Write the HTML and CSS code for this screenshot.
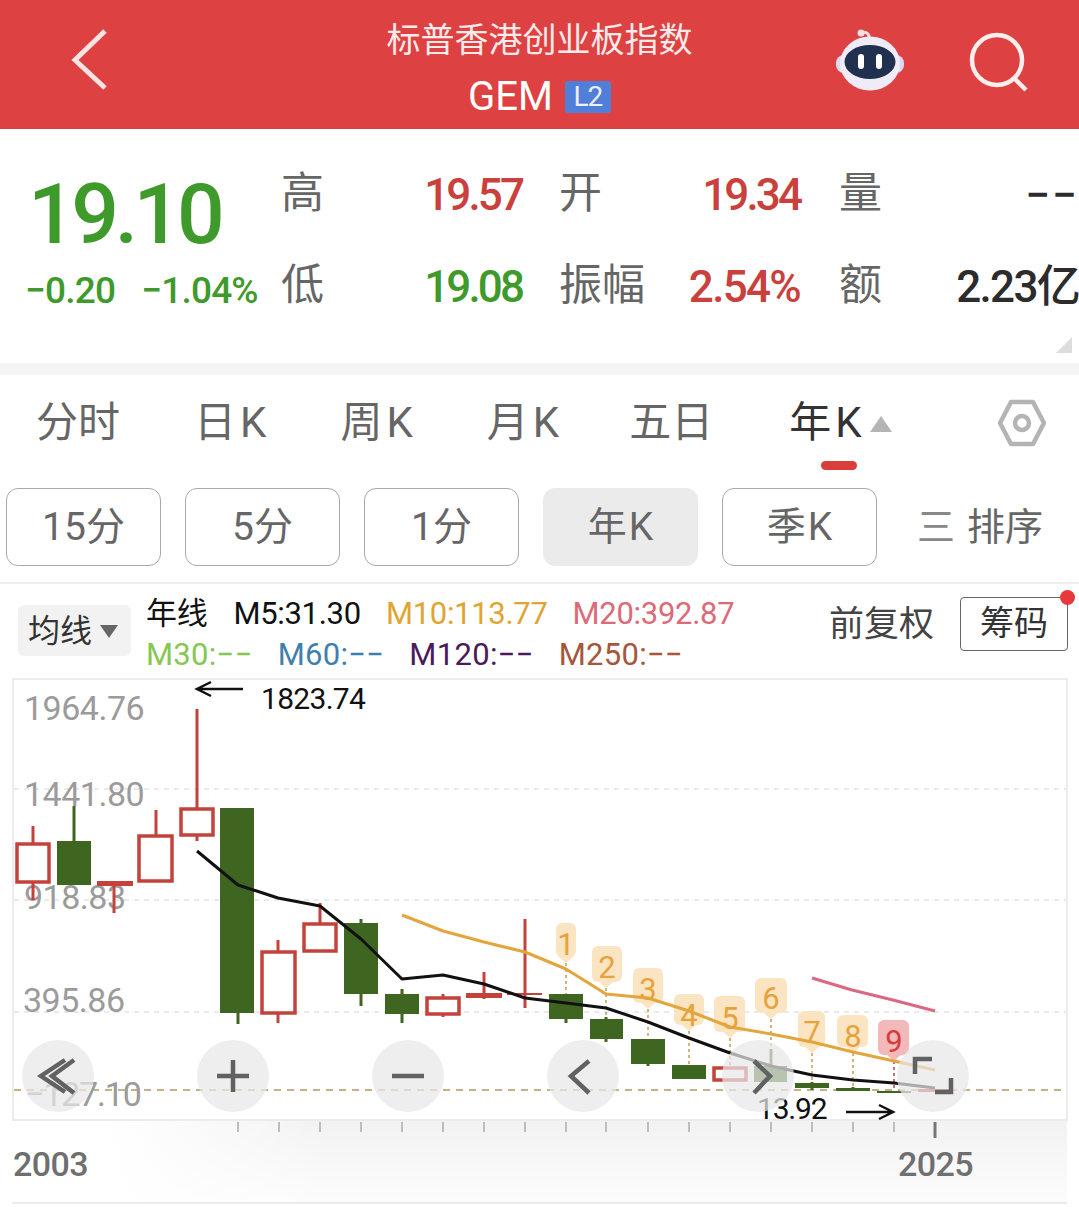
FILE: index.html
```html
<!DOCTYPE html>
<html lang="zh-CN">
<head>
<meta charset="utf-8">
<title>GEM</title>
<link rel="stylesheet" href="styles.css">
</head>
<body>
<header class="topbar">
  <svg class="back" width="40" height="64" viewBox="0 0 40 64"><path d="M35 3 L5 32 L35 60"/></svg>
  <div class="title">
    <div class="title-main">标普香港创业板指数</div>
    <div class="title-sub"><span>GEM</span><span class="badge">L2</span></div>
  </div>
  <svg class="robot" width="70" height="62" viewBox="0 0 70 62">
    <path class="ant" d="M26 4 C31 2 35 5 34 10"/>
    <circle class="ant-dot" cx="26" cy="4" r="3.5"/>
    <rect class="ear" x="1" y="26" width="68" height="18" rx="8"/>
    <ellipse class="head" cx="35" cy="34.500" rx="30" ry="27"/>
    <ellipse class="face" cx="35" cy="33" rx="25.500" ry="17"/>
    <rect class="eye" x="23" y="25" width="6" height="15" rx="3"/>
    <rect class="eye" x="41" y="25" width="6" height="15" rx="3"/>
  </svg>
  <svg class="search" width="62" height="62" viewBox="0 0 62 62"><circle cx="28" cy="28" r="25"/><path d="M46 47 L57 58"/></svg>
</header>

<section class="quote">
  <div class="price-col">
    <div class="price">19.10</div>
    <div class="change"><span>−0.20</span><span>−1.04%</span></div>
  </div>
  <div class="stats">
    <div class="stat"><span class="lab">高</span><span class="val red">19.57</span></div>
    <div class="stat"><span class="lab">开</span><span class="val red">19.34</span></div>
    <div class="stat"><span class="lab">量</span><span class="val dark dash">−−</span></div>
    <div class="stat"><span class="lab">低</span><span class="val green">19.08</span></div>
    <div class="stat"><span class="lab">振幅</span><span class="val red loose">2.54%</span></div>
    <div class="stat"><span class="lab">额</span><span class="val dark loose">2.23亿</span></div>
  </div>
  <span class="corner"></span>
</section>

<nav class="tabs">
  <span class="tab">分时</span>
  <span class="tab">日<i>K</i></span>
  <span class="tab">周<i>K</i></span>
  <span class="tab">月<i>K</i></span>
  <span class="tab tab-five">五日</span>
  <span class="tab tab-active">年<i>K</i><b class="tri"></b></span>
  <svg class="gear" width="48" height="50" viewBox="0 0 48 50"><path d="M13 4 H35 L46 25 L35 46 H13 L2 25 Z"/><circle cx="24" cy="25" r="7"/></svg>
</nav>

<div class="chips">
  <span class="chip">15分</span>
  <span class="chip">5分</span>
  <span class="chip">1分</span>
  <span class="chip chip-on">年<i>K</i></span>
  <span class="chip">季<i>K</i></span>
  <span class="sort"><span class="bars">三</span>排序</span>
</div>

<div class="legend">
  <span class="ma-select">均线<b class="tri-down"></b></span>
  <div class="ma-rows">
    <div class="ma-row"><span class="ma-name">年线</span><span>M5:31.30</span><span class="c10">M10:113.77</span><span class="c20">M20:392.87</span></div>
    <div class="ma-row ma-row-b"><span class="c30">M30:−−</span><span class="c60">M60:−−</span><span class="c120">M120:−−</span><span class="c250">M250:−−</span></div>
  </div>
  <span class="adjust">前复权</span>
  <span class="chips-btn">筹码<b class="dot"></b></span>
</div>

<svg class="chart" width="1079" height="529" viewBox="0 678 1079 529">
  <defs>
    <linearGradient id="fade" x1="0" y1="0" x2="0" y2="1"><stop offset="0" stop-color="#f2f2f2"/><stop offset="1" stop-color="#fcfcfc"/></linearGradient>
    <linearGradient id="fade-left" x1="0" y1="0" x2="1" y2="0"><stop offset="0" stop-color="#fff"/><stop offset=".3" stop-color="#fff"/><stop offset="1" stop-color="#fff" stop-opacity="0"/></linearGradient>
    <clipPath id="plot"><rect x="12" y="678" width="1055" height="442"/></clipPath>
  </defs>
  <rect class="under" x="12" y="1120" width="1055" height="82"/>
  <rect class="under-left" x="12" y="1120" width="320" height="82"/>
  <rect class="frame" x="13" y="679" width="1054" height="441"/>
  <path class="grid" d="M14 789 H1066 M14 900 H1066 M14 1012 H1066"/>
  <path class="zero" d="M14 1090 H1066"/>

  <text class="axis" x="24" y="720">1964.76</text>
  <text class="axis" x="24" y="806">1441.80</text>
  <text class="axis" x="24" y="909">918.83</text>
  <text class="axis" x="23" y="1012">395.86</text>
  <text class="axis axis-neg" x="25" y="1106">−127.10</text>

  <g class="flags">
    <rect x="556" y="923" width="20" height="34" rx="6"/><polygon points="558,956 574,956 566,963"/>
    <rect x="592" y="946" width="30" height="36" rx="6"/><polygon points="598,981 614,981 606,988"/>
    <rect x="633" y="968" width="30" height="35" rx="6"/><polygon points="640,1002 656,1002 648,1009"/>
    <rect x="674" y="994" width="30" height="31" rx="6"/><polygon points="681,1024 697,1024 689,1031"/>
    <rect x="714" y="996" width="31" height="36" rx="6"/><polygon points="722,1031 738,1031 730,1038"/>
    <rect x="755" y="978" width="32" height="35" rx="6"/><polygon points="763,1012 779,1012 771,1019"/>
    <rect x="798" y="1011" width="27" height="36" rx="6"/><polygon points="804,1046 820,1046 812,1053"/>
    <rect x="837" y="1015" width="31" height="32" rx="6"/><polygon points="845,1046 861,1046 853,1053"/>
    <rect class="flag-red" x="878" y="1020" width="31" height="35" rx="6"/><polygon class="flag-red" points="886,1054 902,1054 894,1061"/>
  </g>
  <path class="stem" d="M566 963 V994 M606 988 V1018 M648 1009 V1039 M689 1031 V1065 M730 1038 V1067 M771 1019 V1050 M812 1053 V1083 M853 1053 V1088 "/>
  <path class="stem stem-red" d="M894 1061 V1090"/>

  <g class="wick-up">
    <path d="M33 826 V843 M33 882 V900 M114 886 V913 M156 810 V835 M197 709 V808 M197 835 V841 M278 940 V951 M278 1013 V1023 M320 903 V923 M443 994 V997 M443 1014 V1017 M484 972 V999 M525 919 V1008"/>
  </g>
  <g class="wick-down">
    <path d="M74 806 V841 M238 1012 V1024 M361 919 V924 M361 993 V1006 M402 989 V995 M402 1013 V1023 M566 1018 V1023 M606 1017 V1042 M648 1063 V1066 M771 1049 V1066 M812 1082 V1090 M853 1087 V1090"/>
  </g>
  <g class="body-up">
    <rect x="17" y="844" width="32" height="38"/>
    <rect x="139" y="836" width="33" height="45"/>
    <rect x="181" y="809" width="32" height="26"/>
    <rect x="262" y="952" width="33" height="61"/>
    <rect x="304" y="924" width="32" height="27"/>
    <rect x="427" y="998" width="32" height="16"/>
    <rect x="714" y="1068" width="32" height="12"/>
  </g>
  <g class="body-flat">
    <rect x="97" y="881" width="36" height="5"/>
    <rect x="466" y="993" width="36" height="5"/>
    <rect x="507" y="993" width="35" height="2"/>
    <rect x="918" y="1089" width="34" height="3"/>
  </g>
  <g class="body-down">
    <rect x="57" y="841" width="34" height="44"/>
    <rect x="220" y="808" width="34" height="205"/>
    <rect x="344" y="923" width="34" height="71"/>
    <rect x="385" y="994" width="34" height="20"/>
    <rect x="549" y="994" width="34" height="25"/>
    <rect x="590" y="1019" width="33" height="20"/>
    <rect x="631" y="1039" width="34" height="25"/>
    <rect x="672" y="1065" width="34" height="14"/>
    <rect x="754" y="1066" width="33" height="16"/>
    <rect x="795" y="1083" width="34" height="5"/>
    <rect x="836" y="1088" width="34" height="3"/>
    <rect x="877" y="1091" width="34" height="2"/>
  </g>

  <polyline class="m20" points="812,978 852,990 893,1000 935,1011"/>
  <polyline class="m10" points="402,915 443,931 484,942 525,952 566,969 606,994 648,998 689,1011 730,1027 771,1034 812,1042 853,1052 894,1061 935,1070"/>
  <polyline class="m5" points="197,851 238,885 278,898 320,906 361,939 402,979 443,975 484,984 525,998 566,1003 606,1008 648,1022 689,1038 730,1053 771,1066 812,1075 853,1080 894,1083 935,1088"/>

  <g class="flag-num">
    <text x="566" y="955">1</text><text x="607" y="978">2</text><text x="648" y="1000">3</text>
    <text x="689" y="1026">4</text><text x="730" y="1029">5</text><text x="771" y="1009">6</text>
    <text x="812" y="1043">7</text><text x="853" y="1047">8</text><text class="flag-num-red" x="894" y="1052">9</text>
  </g>

  <text class="note" x="261" y="709">1823.74</text>
  <path class="arrow" d="M243 689 H198 M211 682 L197 689 L211 696"/>
  <g clip-path="url(#plot)"><text class="note note-low" x="757" y="1119">13.92</text></g>
  <path class="arrow" d="M846 1112 H893 M879 1105 L893 1112 L879 1119"/>

  <g class="ctrl">
    <circle cx="58" cy="1076" r="36"/><circle cx="233" cy="1076" r="36"/><circle cx="408" cy="1076" r="36"/>
    <circle cx="583" cy="1076" r="36"/><circle cx="758" cy="1076" r="36"/><circle cx="933" cy="1076" r="36"/>
  </g>
  <g class="ctrl-ico">
    <path d="M65 1060 L41 1076 L65 1092 M74 1060 L52 1076 L74 1093"/>
    <path d="M233 1060 V1092 M217 1076 H249"/>
    <path d="M392 1076 H424"/>
    <path d="M589 1061 L571 1076 L589 1093"/>
    <path d="M754 1061 L770 1076 L754 1093"/>
    <path d="M915 1074 V1059 H932 M951 1078 V1092 H935"/>
  </g>

  <path class="tick" d="M238 1122 V1132 M279 1122 V1132 M320 1122 V1132 M361 1122 V1132 M402 1122 V1132 M443 1122 V1132 M484 1122 V1132 M525 1122 V1132 M566 1122 V1132 M606 1122 V1132 M648 1122 V1132 M689 1122 V1132 M730 1122 V1132 M771 1122 V1132 M812 1122 V1132 M853 1122 V1132 M894 1122 V1132"/>
  <path class="tick-end" d="M935 1122 V1138"/>
  <text class="year" x="13" y="1176">2003</text>
  <text class="year" x="898" y="1176">2025</text>
  <path class="foot" d="M12 1203 H1067"/>
</svg>
</body>
</html>
```
FILE: styles.css
```css
* { box-sizing: border-box; }
html, body { margin: 0; padding: 0; background: #fff; }
body {
  width: 1079px;
  height: 1207px;
  overflow: hidden;
  font-family: Roboto, "Noto Sans CJK SC", sans-serif;
  color: #333;
}
i { font-style: normal; }

/* top bar */
.topbar {
  position: relative;
  height: 129px;
  background: #de4141;
  display: flex;
  align-items: center;
  justify-content: center;
}
.back { position: absolute; left: 70px; top: 28px; }
.back path { fill: none; stroke: #fbe3e3; stroke-width: 5; }
.title { color: #fff; text-align: center; display: flex; flex-direction: column; align-items: center; padding-top: 9px; }
.title-main { font-size: 34px; line-height: 46px; color: #fbeaea; }
.title-sub { display: flex; align-items: center; gap: 12px; font-size: 40px; line-height: 50px; margin-top: 9px; }
.badge {
  width: 46px; height: 32px; background: #4f7fd8; border-radius: 3px;
  font-size: 28px; line-height: 32px; text-align: center; letter-spacing: -1px; color: #eef;
}
.robot { position: absolute; left: 835px; top: 29px; }
.robot .ant { fill: none; stroke: #f3dfe4; stroke-width: 3; }
.robot .ant-dot { fill: #f3dfe4; }
.robot .ear { fill: #ded9f3; }
.robot .head { fill: #efecf8; }
.robot .face { fill: #22304f; }
.robot .eye { fill: #fff; }
.search { position: absolute; left: 969px; top: 32px; }
.search circle, .search path { fill: none; stroke: #fdeeee; stroke-width: 4.5; }

/* quote */
.quote {
  position: relative;
  height: 246px;
  display: flex;
  padding-top: 41px;
  border-bottom: 12px solid #f4f4f4;
}
.price-col { width: 282px; padding-left: 25px; color: #3f9a2c; }
.price { font-size: 84px; line-height: 84px; margin: 3px 0 0 3px; font-weight: 500; letter-spacing: -4.400px; }
.change { display: flex; gap: 26px; font-size: 37px; line-height: 44px; margin-top: 12px; letter-spacing: -.8px; font-weight: 500; }
.stats {
  flex: 1;
  display: grid;
  grid-template-columns: 240px 242px 239px;
  grid-auto-rows: 92px;
  column-gap: 38px;
}
.stat { display: flex; justify-content: space-between; align-items: flex-start; height: 46px; }
.stat:nth-child(3n+2) { padding-right: 2px; }
.stat span { line-height: 46px; white-space: nowrap; }
.lab { font-size: 43px; color: #666; margin-left: -1px; }
.val { font-size: 44px; font-weight: 500; letter-spacing: -2.900px; margin-top: 2px; }
.loose { letter-spacing: -1.700px; }
.dash { letter-spacing: 2px; }
.red { color: #c9403c; }
.green { color: #3f9a2c; }
.dark { color: #2c2c2c; }
.corner {
  position: absolute; right: 7px; bottom: 10px;
  width: 0; height: 0;
  border-left: 16px solid transparent;
  border-bottom: 16px solid #dcdcdc;
}

/* tabs */
.tabs {
  position: relative;
  height: 113px;
  padding: 22px 0 0 36px;
  display: flex;
  gap: 74px;
  align-items: flex-start;
  font-size: 42px;
  line-height: 52px;
  color: #666;
}
.tab { position: relative; white-space: nowrap; }
.tab i { margin-left: 4px; }
.tab-five { margin-left: -4px; }
.tab-active { margin-left: 2px; color: #333; }
.tab-active::after {
  content: ""; position: absolute; left: 32px; top: 64px;
  width: 36px; height: 9px; border-radius: 5px; background: #d93e3a;
}
.tri {
  position: absolute; left: 81px; top: 19px;
  border-left: 11px solid transparent; border-right: 11px solid transparent;
  border-bottom: 16px solid #b4b4b4;
}
.gear { position: absolute; left: 998px; top: 23px; }
.gear path, .gear circle { fill: none; stroke: #b4b4b4; stroke-width: 4.5; stroke-linejoin: round; }

/* chips */
.chips {
  height: 96px;
  padding: 0 0 18px 6px;
  display: flex;
  gap: 24px;
  border-bottom: 2px solid #eee;
}
.chip {
  width: 155px; height: 78px;
  border: 1px solid #a9a9a9; border-radius: 12px;
  text-align: center;
  font-size: 39px; line-height: 77px; color: #666;
}
.chip i { margin-left: 2px; }
.chip-on { background: #ebebeb; border-color: #ebebeb; }
.sort { display: flex; align-items: center; padding-bottom: 6px; font-size: 38px; color: #666; margin-left: 16px; white-space: nowrap; }
.bars { margin-right: 12px; color: #888; }

/* legend */
.legend {
  position: relative;
  height: 94px;
  padding-left: 18px;
  display: flex;
  align-items: flex-start;
}
.ma-select {
  width: 113px; height: 51px; margin-top: 21px;
  background: #f2f2f2; border-radius: 6px;
  padding-left: 10px;
  display: flex; align-items: center;
  font-size: 32px; line-height: 46px; color: #333; white-space: nowrap;
}
.tri-down {
  margin-left: 8px; margin-top: 2px;
  border-left: 9px solid transparent; border-right: 9px solid transparent;
  border-top: 13px solid #666;
}
.ma-rows { margin-left: 15px; padding-top: 9px; }
.ma-row { display: flex; gap: 25px; height: 41px; font-size: 31px; line-height: 41px; letter-spacing: -.3px; color: #111; white-space: nowrap; }
.ma-row-b { gap: 25px; letter-spacing: .3px; }
.ma-name { font-size: 31px; margin-right: 1px; }
.c10 { color: #dfa530; }
.c20 { color: #dc6a78; }
.c30 { color: #86c654; }
.c60 { color: #3f7fae; }
.c120 { color: #4b1a5c; }
.c250 { color: #a5563c; }
.adjust { position: absolute; left: 829px; top: 17px; font-size: 35px; line-height: 48px; color: #444; white-space: nowrap; }
.chips-btn {
  position: absolute; left: 960px; top: 13px;
  width: 108px; height: 54px;
  border: 1px solid #666; border-radius: 4px;
  text-align: center;
  font-size: 34px; line-height: 50px; color: #333;
}
.dot { position: absolute; right: -8px; top: -8px; width: 15px; height: 15px; border-radius: 50%; background: #e8383c; }

/* chart */
.chart { display: block; }
.chart text { font-family: Roboto, "Noto Sans CJK SC", sans-serif; }
.under { fill: url(#fade); }
.under-left { fill: url(#fade-left); }
.frame { fill: #fff; stroke: #ececec; stroke-width: 2; }
.grid { fill: none; stroke: #e3e3e3; stroke-width: 1.5; stroke-dasharray: 5 5; }
.zero { fill: none; stroke: #c2b285; stroke-width: 2; stroke-dasharray: 7 6; }
.axis { font-size: 34px; fill: #9b9b9b; letter-spacing: -.5px; }
.axis-neg { letter-spacing: -1.200px; }
.flags rect, .flags polygon { fill: #fbe4c2; }
.flags .flag-red { fill: #f3b8ba; }
.stem { fill: none; stroke: #c79a55; stroke-width: 1.5; stroke-dasharray: 3 3; }
.stem-red { stroke: #b3474a; }
.wick-up path { fill: none; stroke: #c4423c; stroke-width: 3; }
.wick-down path { fill: none; stroke: #3f6621; stroke-width: 3; }
.body-up rect { fill: #fff; stroke: #c4423c; stroke-width: 3.500px; }
.body-flat rect { fill: #c4423c; }
.body-down rect { fill: #3f6621; }
.m5, .m10, .m20 { fill: none; stroke-linejoin: round; stroke-width: 3; }
.m5 { stroke: #111; }
.m10 { stroke: #e2a63c; }
.m20 { stroke: #d96880; }
.flag-num text { font-size: 31px; fill: #e8a23c; text-anchor: middle; }
.flag-num .flag-num-red { fill: #d93a3a; }
.note { font-size: 30px; fill: #111; letter-spacing: -.7px; }
.note-low { letter-spacing: -1.200px; }
.arrow { fill: none; stroke: #111; stroke-width: 2.500px; }
.ctrl circle { fill: rgba(232, 232, 232, .72); }
.ctrl-ico path { fill: none; stroke: #616161; stroke-width: 4.500px; }
.tick { fill: none; stroke: #bdbdbd; stroke-width: 2; }
.tick-end { fill: none; stroke: #777; stroke-width: 3; }
.year { font-size: 34px; fill: #6f6f6f; font-weight: 500; letter-spacing: -.6px; }
.foot { fill: none; stroke: #ececec; stroke-width: 2; }
```
